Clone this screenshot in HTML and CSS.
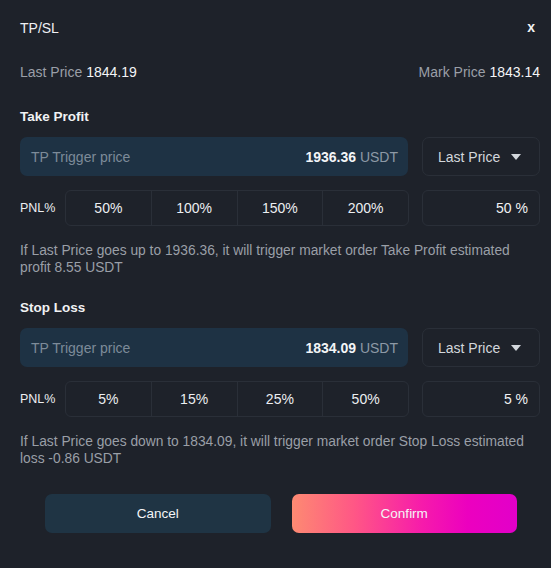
FILE: index.html
```html
<!DOCTYPE html>
<html lang="en">
<head>
<meta charset="utf-8">
<title>TP/SL</title>
<link rel="stylesheet" href="styles.css">
</head>
<body>
<div class="modal">
  <div class="header">
    <span class="title">TP/SL</span>
    <span class="close">x</span>
  </div>
  <div class="prices">
    <span class="price"><span class="muted">Last Price</span> <b>1844.19</b></span>
    <span class="price"><span class="muted">Mark Price</span> <b>1843.14</b></span>
  </div>

  <div class="section">
    <div class="section-title">Take Profit</div>
    <div class="input-row">
      <div class="trigger">
        <span class="placeholder">TP Trigger price</span>
        <span class="value"><b>1936.36</b> <span class="unit">USDT</span></span>
      </div>
      <div class="select">
        <span>Last Price</span>
        <span class="caret"></span>
      </div>
    </div>
    <div class="pnl-row">
      <span class="pnl-label">PNL%</span>
      <div class="segments">
        <span class="seg">50%</span>
        <span class="seg">100%</span>
        <span class="seg">150%</span>
        <span class="seg">200%</span>
      </div>
      <div class="pct-box">50 %</div>
    </div>
    <p class="help">If Last Price goes up to 1936.36, it will trigger market order Take Profit estimated profit 8.55 USDT</p>
  </div>

  <div class="section second">
    <div class="section-title">Stop Loss</div>
    <div class="input-row">
      <div class="trigger">
        <span class="placeholder">TP Trigger price</span>
        <span class="value"><b>1834.09</b> <span class="unit">USDT</span></span>
      </div>
      <div class="select">
        <span>Last Price</span>
        <span class="caret"></span>
      </div>
    </div>
    <div class="pnl-row">
      <span class="pnl-label">PNL%</span>
      <div class="segments">
        <span class="seg">5%</span>
        <span class="seg">15%</span>
        <span class="seg">25%</span>
        <span class="seg">50%</span>
      </div>
      <div class="pct-box">5 %</div>
    </div>
    <p class="help">If Last Price goes down to 1834.09, it will trigger market order Stop Loss estimated loss -0.86 USDT</p>
  </div>

  <div class="actions">
    <button class="btn cancel">Cancel</button>
    <button class="btn confirm">Confirm</button>
  </div>
</div>
</body>
</html>
```

FILE: styles.css
```css
* { box-sizing: border-box; }
html, body {
  margin: 0;
  padding: 0;
  background: #1e222a;
}
body {
  font-family: "Liberation Sans", Arial, sans-serif;
  color: #eceef1;
  width: 551px;
  height: 568px;
  overflow: hidden;
}
.modal {
  padding: 0 11px 0 20px;
}
.header {
  height: 56px;
  display: flex;
  justify-content: space-between;
  align-items: center;
}
.title {
  font-size: 14px;
  color: #eef0f3;
}
.close {
  font-size: 14px;
  font-weight: bold;
  color: #f2f3f5;
  margin-right: 5px;
  line-height: 1;
  padding-bottom: 2px;
}
.prices {
  margin-top: 7px;
  display: flex;
  justify-content: space-between;
  font-size: 14px;
  line-height: 18px;
}
.prices b {
  font-weight: normal;
  color: #f4f5f7;
}
.muted {
  color: #9a9fa7;
}
.section {
  margin-top: 26px;
}
.section.second {
  margin-top: 22px;
}
.section-title {
  font-size: 13.5px;
  font-weight: bold;
  line-height: 20px;
  color: #f1f2f4;
}
.input-row {
  margin-top: 10px;
  display: flex;
  gap: 14px;
  height: 39px;
}
.trigger {
  flex: 1;
  background: #1e3244;
  border-radius: 7px;
  display: flex;
  align-items: center;
  justify-content: space-between;
  padding: 0 10px 0 11px;
  font-size: 14px;
}
.placeholder {
  color: #7d8b99;
}
.value b {
  color: #f3f5f7;
}
.unit {
  color: #8d99a6;
}
.select {
  width: 118px;
  border: 1px solid #2a2f38;
  border-radius: 7px;
  display: flex;
  align-items: center;
  padding-left: 15px;
  gap: 11px;
  font-size: 14px;
  color: #d3d7dc;
}
.caret {
  width: 0;
  height: 0;
  border-left: 5px solid transparent;
  border-right: 5px solid transparent;
  border-top: 6px solid #d3d7dc;
  margin-top: 1px;
}
.pnl-row {
  margin-top: 14px;
  display: flex;
  align-items: stretch;
  height: 36px;
}
.pnl-label {
  width: 45px;
  display: flex;
  align-items: center;
  font-size: 12.5px;
  color: #eceef1;
}
.segments {
  flex: 1;
  display: flex;
  border: 1px solid #2a2f38;
  border-radius: 6px;
  margin-right: 13px;
}
.seg {
  flex: 1;
  display: flex;
  align-items: center;
  justify-content: center;
  font-size: 14px;
  color: #eceef1;
  border-left: 1px solid #2a2f38;
}
.seg:first-child {
  border-left: none;
}
.pct-box {
  width: 118px;
  border: 1px solid #2a2f38;
  border-radius: 6px;
  display: flex;
  align-items: center;
  justify-content: flex-end;
  padding-right: 11px;
  font-size: 14px;
  color: #f1f2f4;
}
.help {
  margin: 16px 0 0;
  font-size: 13.8px;
  line-height: 17px;
  color: #9a9fa7;
}
.actions {
  margin-top: 27px;
  display: flex;
  gap: 21px;
  padding: 0 23px 0 25px;
}
.btn {
  flex: 1;
  height: 39px;
  border: none;
  border-radius: 7px;
  font-family: "Liberation Sans", Arial, sans-serif;
  font-size: 13.5px;
  color: #f4f5f7;
  cursor: pointer;
}
.cancel {
  background: #1f3444;
}
.confirm {
  background: linear-gradient(90deg, #fd8a72 0%, #ff5686 28%, #f61bab 58%, #ec00bf 78%, #e200c9 100%);
}
```
